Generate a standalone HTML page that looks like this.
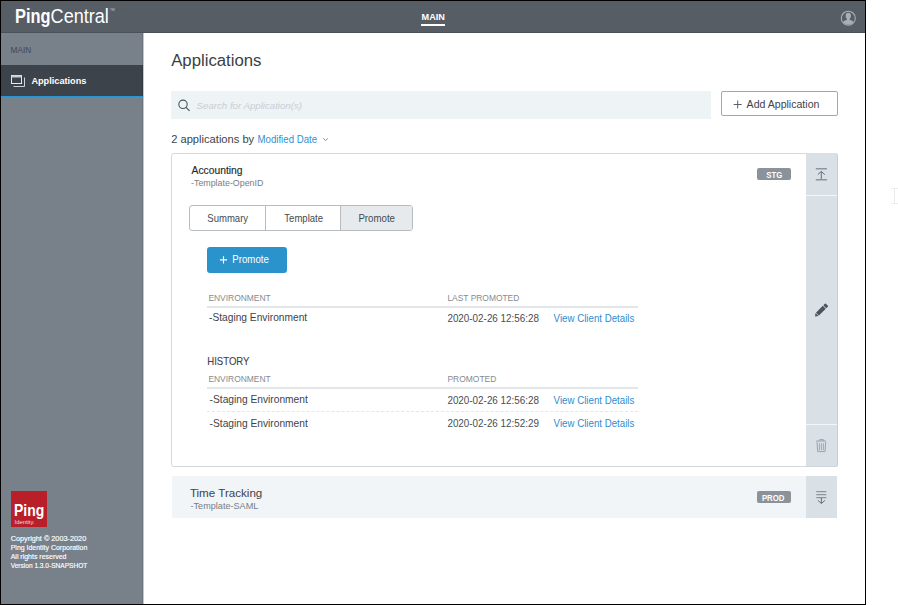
<!DOCTYPE html>
<html><head><meta charset="utf-8">
<style>
html,body{margin:0;padding:0;background:#fff;width:898px;height:605px;overflow:hidden;}
body{position:relative;font-family:"Liberation Sans",sans-serif;}
div{position:absolute;box-sizing:border-box;}
svg{position:absolute;left:0;top:0;}
</style></head><body>
<div style="left:0;top:0;width:866px;height:605px;border:1px solid #000;background:#fff"></div>
<!-- header -->
<div style="left:1px;top:1px;width:864px;height:31px;background:#575d65"></div>
<div style="left:1px;top:32px;width:864px;height:1px;background:#4b5158"></div>
<!-- sidebar -->
<div style="left:1px;top:33px;width:141px;height:571px;background:#78808a"></div>
<div style="left:142px;top:33px;width:1px;height:571px;background:#6c737b"></div>
<div style="left:143px;top:33px;width:1px;height:571px;background:#c4c8cc"></div>
<div style="left:1px;top:65px;width:141px;height:31px;background:#3d434a"></div>
<div style="left:142px;top:65px;width:1px;height:31px;background:#343a40"></div>
<div style="left:1px;top:96px;width:142px;height:1px;background:#2696d4"></div>
<div style="left:1px;top:97px;width:142px;height:1px;background:#5c8aa8"></div>
<div style="left:143px;top:96px;width:1px;height:1px;background:#8cc6e8"></div>
<!-- red logo -->
<div style="left:11px;top:491px;width:36px;height:36px;background:#b81f29"></div>
<!-- search -->
<div style="left:171px;top:91px;width:540px;height:28px;background:#eef3f6"></div>
<!-- add button -->
<div style="left:721px;top:91px;width:117px;height:25px;border:1px solid #a3a8ad;border-radius:2px;background:#fff"></div>
<!-- card1 -->
<div style="left:171px;top:153px;width:667px;height:314px;border:1px solid #d5d9dd;border-radius:3px;background:#fff"></div>
<div style="left:806px;top:153px;width:32px;height:314px;background:#d9e0e6;border-right:1px solid #c9ced4;border-bottom:1px solid #cfd4d9;border-radius:0 3px 2px 0"></div>
<div style="left:806px;top:195px;width:31px;height:1px;background:#f4f6f8"></div>
<div style="left:806px;top:424px;width:31px;height:1px;background:#f4f6f8"></div>
<!-- badge -->
<div style="left:757px;top:168px;width:34px;height:12px;background:#8c9299;border-radius:2px"></div>
<!-- tabs -->
<div style="left:189px;top:205px;width:224px;height:26px;border:1px solid #b7bcc1;border-radius:3px;background:#fff;overflow:hidden">
  <div style="left:150px;top:0;width:72px;height:24px;background:#e7eaed"></div>
  <div style="left:75px;top:0;width:1px;height:24px;background:#b7bcc1"></div>
  <div style="left:150px;top:0;width:1px;height:24px;background:#b7bcc1"></div>
</div>
<!-- promote button -->
<div style="left:207px;top:247px;width:80px;height:26px;background:#2a93cc;border-radius:3px"></div>
<!-- table lines -->
<div style="left:207px;top:306px;width:431px;height:2px;background:#e3e6e9"></div>
<div style="left:207px;top:387px;width:431px;height:2px;background:#e3e6e9"></div>
<div style="left:207px;top:411px;width:431px;height:1px;border-top:1px dashed #e4e7ea"></div>
<!-- card2 -->
<div style="left:172px;top:476px;width:665px;height:42px;background:#f1f5f8"></div>
<div style="left:806px;top:476px;width:31px;height:42px;background:#d9e0e6"></div>
<div style="left:757px;top:491px;width:34px;height:12px;background:#8c9299;border-radius:2px"></div>

<svg width="898" height="605" viewBox="0 0 898 605" style="font-family:'Liberation Sans',sans-serif">
<text x="15" y="22.6" font-size="20.5" font-weight="700" font-style="normal" fill="#ffffff" textLength="35.5" lengthAdjust="spacingAndGlyphs">Ping</text>
<text x="50.6" y="22.6" font-size="20.5" font-weight="400" font-style="normal" fill="#ffffff" textLength="58.3" lengthAdjust="spacingAndGlyphs">Central</text>
<text x="421.6" y="19.8" font-size="9.7" font-weight="700" font-style="normal" fill="#ffffff" textLength="23.4" lengthAdjust="spacingAndGlyphs">MAIN</text>
<text x="10.5" y="52.9" font-size="8.7" font-weight="400" font-style="normal" fill="#43484e" textLength="20.8" lengthAdjust="spacingAndGlyphs">MAIN</text>
<text x="31.4" y="84.1" font-size="9.7" font-weight="700" font-style="normal" fill="#ffffff" textLength="55" lengthAdjust="spacingAndGlyphs">Applications</text>
<text x="171.2" y="65.5" font-size="15.8" font-weight="400" font-style="normal" fill="#3a3f44" textLength="90.3" lengthAdjust="spacingAndGlyphs">Applications</text>
<text x="196.6" y="108.7" font-size="9.6" font-weight="400" font-style="italic" fill="#c9ced3" textLength="105.4" lengthAdjust="spacingAndGlyphs">Search for Application(s)</text>
<text x="171.2" y="142.7" font-size="11" font-weight="400" font-style="normal" fill="#3e4349" textLength="83" lengthAdjust="spacingAndGlyphs">2 applications by</text>
<text x="257.5" y="142.7" font-size="10.6" font-weight="400" font-style="normal" fill="#3291d2" textLength="59.6" lengthAdjust="spacingAndGlyphs">Modified Date</text>
<text x="746.6" y="108.2" font-size="10.5" font-weight="400" font-style="normal" fill="#3e4349" textLength="72.8" lengthAdjust="spacingAndGlyphs">Add Application</text>
<text x="191.6" y="174" font-size="10.3" font-weight="400" font-style="normal" fill="#25292d" textLength="51" lengthAdjust="spacingAndGlyphs" stroke="#25292d" stroke-width="0.15">Accounting</text>
<text x="191" y="185.6" font-size="8.8" font-weight="400" font-style="normal" fill="#787e84" textLength="72.4" lengthAdjust="spacingAndGlyphs">-Template-OpenID</text>
<text x="207.3" y="222" font-size="10.2" font-weight="400" font-style="normal" fill="#454a50" textLength="40.8" lengthAdjust="spacingAndGlyphs">Summary</text>
<text x="284.3" y="222" font-size="10.2" font-weight="400" font-style="normal" fill="#454a50" textLength="38.8" lengthAdjust="spacingAndGlyphs">Template</text>
<text x="358.4" y="222" font-size="10.2" font-weight="400" font-style="normal" fill="#454a50" textLength="36.6" lengthAdjust="spacingAndGlyphs">Promote</text>
<text x="232.3" y="263.4" font-size="10.2" font-weight="400" font-style="normal" fill="#ffffff" textLength="36.6" lengthAdjust="spacingAndGlyphs">Promote</text>
<text x="208.4" y="301" font-size="8.35" font-weight="400" font-style="normal" fill="#858b91" textLength="62.3" lengthAdjust="spacingAndGlyphs">ENVIRONMENT</text>
<text x="447.4" y="301" font-size="8.35" font-weight="400" font-style="normal" fill="#858b91" textLength="71.9" lengthAdjust="spacingAndGlyphs">LAST PROMOTED</text>
<text x="209" y="320.8" font-size="10.1" font-weight="400" font-style="normal" fill="#3e4349" textLength="98.2" lengthAdjust="spacingAndGlyphs">-Staging Environment</text>
<text x="447.4" y="321.9" font-size="10.8" font-weight="400" font-style="normal" fill="#474c52" textLength="91.6" lengthAdjust="spacingAndGlyphs">2020-02-26 12:56:28</text>
<text x="553.6" y="321.9" font-size="10.2" font-weight="400" font-style="normal" fill="#2e8dcf" textLength="80.8" lengthAdjust="spacingAndGlyphs">View Client Details</text>
<text x="207.3" y="364.9" font-size="10.3" font-weight="400" font-style="normal" fill="#3e4349" textLength="42.2" lengthAdjust="spacingAndGlyphs" stroke="#3e4349" stroke-width="0.1">HISTORY</text>
<text x="208.4" y="382" font-size="8.35" font-weight="400" font-style="normal" fill="#858b91" textLength="62.3" lengthAdjust="spacingAndGlyphs">ENVIRONMENT</text>
<text x="447.4" y="382" font-size="8.35" font-weight="400" font-style="normal" fill="#858b91" textLength="49" lengthAdjust="spacingAndGlyphs">PROMOTED</text>
<text x="209.6" y="403.1" font-size="10.1" font-weight="400" font-style="normal" fill="#3e4349" textLength="98.2" lengthAdjust="spacingAndGlyphs">-Staging Environment</text>
<text x="447.4" y="403.5" font-size="10.8" font-weight="400" font-style="normal" fill="#474c52" textLength="91.6" lengthAdjust="spacingAndGlyphs">2020-02-26 12:56:28</text>
<text x="553.6" y="403.5" font-size="10.2" font-weight="400" font-style="normal" fill="#2e8dcf" textLength="80.8" lengthAdjust="spacingAndGlyphs">View Client Details</text>
<text x="209.6" y="426.6" font-size="10.1" font-weight="400" font-style="normal" fill="#3e4349" textLength="98.2" lengthAdjust="spacingAndGlyphs">-Staging Environment</text>
<text x="447.4" y="427" font-size="10.8" font-weight="400" font-style="normal" fill="#474c52" textLength="91.6" lengthAdjust="spacingAndGlyphs">2020-02-26 12:52:29</text>
<text x="553.6" y="427" font-size="10.2" font-weight="400" font-style="normal" fill="#2e8dcf" textLength="80.8" lengthAdjust="spacingAndGlyphs">View Client Details</text>
<text x="766.3" y="177.8" font-size="9.2" font-weight="700" font-style="normal" fill="#ffffff" textLength="16.0" lengthAdjust="spacingAndGlyphs">STG</text>
<text x="189.9" y="496.5" font-size="11.5" font-weight="400" font-style="normal" fill="#3e4349" textLength="72.4" lengthAdjust="spacingAndGlyphs">Time Tracking</text>
<text x="190.5" y="508.5" font-size="9" font-weight="400" font-style="normal" fill="#787e84" textLength="67.8" lengthAdjust="spacingAndGlyphs">-Template-SAML</text>
<text x="761.9" y="501.4" font-size="9.2" font-weight="700" font-style="normal" fill="#ffffff" textLength="22.5" lengthAdjust="spacingAndGlyphs">PROD</text>
<text x="10.7" y="540.8" font-size="7" font-weight="400" font-style="normal" fill="#ffffff" textLength="75.5" lengthAdjust="spacingAndGlyphs" stroke="#ffffff" stroke-width="0.15">Copyright © 2003-2020</text>
<text x="10.7" y="549.7" font-size="7" font-weight="400" font-style="normal" fill="#ffffff" textLength="76.6" lengthAdjust="spacingAndGlyphs" stroke="#ffffff" stroke-width="0.15">Ping Identity Corporation</text>
<text x="10.7" y="558.7" font-size="7" font-weight="400" font-style="normal" fill="#ffffff" textLength="55.8" lengthAdjust="spacingAndGlyphs" stroke="#ffffff" stroke-width="0.15">All rights reserved</text>
<text x="10.7" y="567.5" font-size="7" font-weight="400" font-style="normal" fill="#ffffff" textLength="76.6" lengthAdjust="spacingAndGlyphs" stroke="#ffffff" stroke-width="0.15">Version 1.3.0-SNAPSHOT</text>
<text x="14" y="516.4" font-size="16.5" font-weight="700" font-style="normal" fill="#ffffff" textLength="30.3" lengthAdjust="spacingAndGlyphs">Ping</text>
<text x="14.6" y="523.8" font-size="5.5" font-weight="400" font-style="normal" fill="#f6dcdd" textLength="20" lengthAdjust="spacingAndGlyphs">Identity.</text>
<!-- trademark -->
<text x="110" y="11" font-size="3.2" fill="#c8ccd0">TM</text>
<!-- header underline -->
<rect x="421" y="24" width="24" height="2" fill="#ffffff"/>
<!-- user icon -->
<circle cx="848.3" cy="18.2" r="7" fill="none" stroke="#a7afb7" stroke-width="1.1"/>
<path d="M848.3 12.8 c1.8 0 2.6 1.3 2.6 3 c0 1.4 -0.6 2.6 -1.3 3.2 l0 0.8 c2 0.6 3.4 1.4 4.1 2.3 a7 7 0 0 1 -10.8 0 c0.7 -0.9 2.1 -1.7 4.1 -2.3 l0 -0.8 c-0.7 -0.6 -1.3 -1.8 -1.3 -3.2 c0 -1.7 0.8 -3 2.6 -3z" fill="#a7afb7"/>
<!-- app icon sidebar -->
<rect x="11.5" y="75.5" width="10" height="8" fill="none" stroke="#e6e8ea" stroke-width="1"/>
<rect x="11.5" y="75.5" width="10" height="2" fill="#c9cdd1"/>
<path d="M24.5 77.5 V86.5 H13.5" fill="none" stroke="#d0d3d6" stroke-width="1"/>
<!-- search icon -->
<circle cx="183" cy="104.3" r="4.2" fill="none" stroke="#4b5661" stroke-width="1.1"/>
<path d="M186 107.3 L189.6 110.9" stroke="#4b5661" stroke-width="1.2"/>
<!-- chevron -->
<path d="M323.3 138.3 L325.5 140.6 L327.7 138.3" fill="none" stroke="#3291d2" stroke-width="0.9"/>
<!-- add plus -->
<path d="M737.7 100.5 V108.5 M733.7 104.5 H741.7" stroke="#5a5f65" stroke-width="1"/>
<!-- promote plus -->
<path d="M223.5 256.3 V263.5 M219.9 259.9 H227.1" stroke="#ffffff" stroke-width="1.1"/>
<!-- upload icon -->
<path d="M815.8 168.7 H826.9 M815.8 179.8 H826.9" stroke="#8e959c" stroke-width="1.5"/>
<path d="M821.3 171.6 V179 M817.8 174.6 L821.3 171.4 L824.8 174.6" fill="none" stroke="#676e75" stroke-width="1"/>
<!-- pencil -->
<g transform="translate(815,316.6) rotate(-45)" fill="#4d535a">
<path d="M0 0 L2.9 -2.1 V2.1 Z"/>
<rect x="3.5" y="-2.1" width="9.6" height="4.2"/>
<rect x="13.8" y="-2.1" width="3" height="4.2" rx="0.7"/>
</g>
<!-- trash -->
<path d="M816.2 441 H825.9" stroke="#9ca3aa" stroke-width="1.1"/>
<path d="M819.6 440.8 V439.6 H823.4 V440.8" fill="none" stroke="#9ca3aa" stroke-width="1"/>
<path d="M817 442 L817.7 451.6 H825 L825.7 442" fill="none" stroke="#9ca3aa" stroke-width="1"/>
<path d="M819.4 443.3 V450.3 M821.4 443.3 V450.3 M823.4 443.3 V450.3" stroke="#9ca3aa" stroke-width="0.9"/>
<!-- download icon -->
<path d="M816.3 491.6 H826.3 M816.3 494.6 H826.3 M816.3 497.6 H826.3" stroke="#8e959c" stroke-width="1.1"/>
<path d="M821.4 497.8 V503.3 M817.9 500.4 L821.4 503.5 L824.9 500.4" fill="none" stroke="#676e75" stroke-width="1"/>
<!-- cursor ibeam right -->
<path d="M891 188.5 H898 M891 203.5 H898 M894.5 189 V203" stroke="#ececec" stroke-width="1"/>
</svg>
</body></html>
